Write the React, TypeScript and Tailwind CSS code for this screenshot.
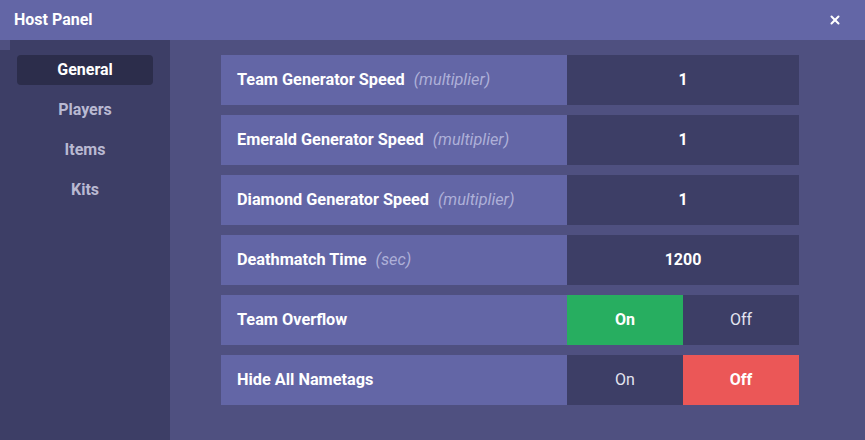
import { X } from "lucide-react";

const rows = [
  { label: "Team Generator Speed", hint: "(multiplier)", value: "1" },
  { label: "Emerald Generator Speed", hint: "(multiplier)", value: "1" },
  { label: "Diamond Generator Speed", hint: "(multiplier)", value: "1" },
  { label: "Deathmatch Time", hint: "(sec)", value: "1200" },
];

const tabs = ["General", "Players", "Items", "Kits"];

function Toggle({ on }: { on: boolean }) {
  return (
    <div className="flex w-[232px]">
      <div
        className={
          on
            ? "flex-1 flex items-center justify-center bg-[#27ae60] text-white font-bold"
            : "flex-1 flex items-center justify-center bg-[#3d3e66] text-[#e4e4f0]"
        }
      >
        On
      </div>
      <div
        className={
          !on
            ? "flex-1 flex items-center justify-center bg-[#eb5757] text-white font-bold"
            : "flex-1 flex items-center justify-center bg-[#3d3e66] text-[#e4e4f0]"
        }
      >
        Off
      </div>
    </div>
  );
}

export default function App() {
  return (
    <div className="w-[865px] h-[440px] flex flex-col font-['Roboto',sans-serif] text-[16px] overflow-hidden">
      <div className="h-10 bg-[#6366a6] flex items-center justify-between pl-[14px] pr-[23px] text-white font-bold">
        <span>Host Panel</span>
        <X size={14} strokeWidth={3.5} />
      </div>
      <div className="flex flex-1">
        <div className="w-[170px] bg-[#3d3e66] relative pt-[15px] px-[17px] flex flex-col gap-[10px]">
          <div className="absolute left-0 top-0 w-[10px] h-[10px] bg-[#4f5080]" />
          {tabs.map((t, i) => (
            <div
              key={t}
              className={
                i === 0
                  ? "h-[30px] rounded-[4px] bg-[#2c2d4b] text-white font-bold flex items-center justify-center"
                  : "h-[30px] text-[#b9b9d2] font-bold flex items-center justify-center"
              }
            >
              {t}
            </div>
          ))}
        </div>
        <div className="flex-1 bg-[#4f5080] pt-[15px] pl-[51px] flex flex-col gap-[10px]">
          {rows.map((r) => (
            <div key={r.label} className="flex h-[50px]">
              <div className="w-[346px] bg-[#6366a6] flex items-center pl-4 text-white font-bold text-[16.3px]">
                {r.label}
                <span className="ml-[9px] italic font-normal text-[#aeb0d8]">{r.hint}</span>
              </div>
              <div className="w-[232px] bg-[#3d3e66] flex items-center justify-center text-white font-bold">
                {r.value}
              </div>
            </div>
          ))}
          <div className="flex h-[50px]">
            <div className="w-[346px] bg-[#6366a6] flex items-center pl-4 text-white font-bold text-[16.3px]">Team Overflow</div>
            <Toggle on={true} />
          </div>
          <div className="flex h-[50px]">
            <div className="w-[346px] bg-[#6366a6] flex items-center pl-4 text-white font-bold text-[16.3px]">Hide All Nametags</div>
            <Toggle on={false} />
          </div>
        </div>
      </div>
    </div>
  );
}
